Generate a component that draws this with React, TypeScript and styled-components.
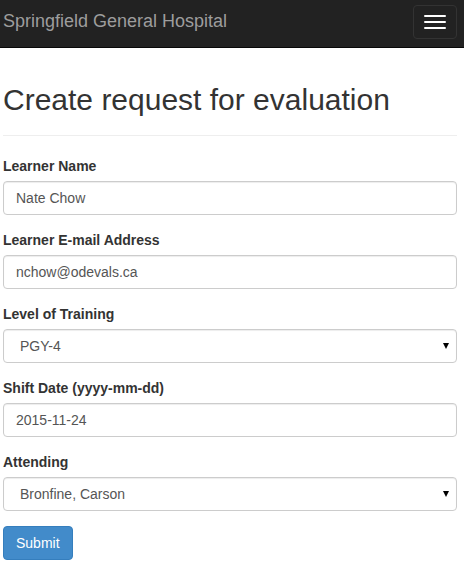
import styled, { createGlobalStyle } from "styled-components";

const GlobalStyle = createGlobalStyle`
  html, body {
    margin: 0;
    padding: 0;
    background: #fff;
  }
  body {
    font-family: "Liberation Sans", Arial, sans-serif;
    font-size: 14px;
    line-height: 1.42857;
    color: #333;
  }
  * {
    box-sizing: border-box;
  }
`;

const Navbar = styled.nav`
  height: 48px;
  background: #222;
  border-bottom: 1px solid #080808;
  display: flex;
  align-items: center;
  justify-content: space-between;
  padding: 0 7px 0 3px;
`;

const Brand = styled.a`
  font-size: 18px;
  line-height: 20px;
  color: #9d9d9d;
  text-decoration: none;
  padding-bottom: 5px;
`;

const Toggle = styled.button`
  width: 44px;
  height: 34px;
  margin-bottom: 4px;
  padding: 9px 10px;
  background: transparent;
  border: 1px solid #333;
  border-radius: 4px;
  display: flex;
  flex-direction: column;
  gap: 4px;
  cursor: pointer;
`;

const IconBar = styled.span`
  display: block;
  width: 22px;
  height: 2px;
  border-radius: 1px;
  background: #fff;
`;

const Container = styled.main`
  padding: 0 7px 0 3px;
`;

const PageHeader = styled.div`
  margin: 35px 0 20px;
  padding-bottom: 9px;
  border-bottom: 1px solid #eee;
`;

const Title = styled.h1`
  margin: 0 0 10px;
  font-size: 30px;
  font-weight: 400;
  line-height: 1.1;
  color: #333;
`;

const FormGroup = styled.div`
  margin-bottom: 15px;
`;

const Label = styled.label`
  display: block;
  margin-bottom: 5px;
  font-weight: 700;
  font-size: 14px;
  line-height: 20px;
  color: #333;
`;

const fieldCss = `
  display: block;
  width: 100%;
  height: 34px;
  padding: 6px 12px;
  font-family: "Liberation Sans", Arial, sans-serif;
  font-size: 14px;
  line-height: 20px;
  color: #555;
  background: #fff;
  border: 1px solid #ccc;
  border-radius: 4px;
  box-shadow: inset 0 1px 1px rgba(0, 0, 0, 0.075);
  outline: none;
`;

const Input = styled.input`
  ${fieldCss}
`;

const SelectWrap = styled.div`
  position: relative;
`;

const Select = styled.select`
  ${fieldCss}
  appearance: none;
  -webkit-appearance: none;
  padding-left: 16px;
`;

const Caret = styled.span`
  position: absolute;
  right: 8px;
  top: 14px;
  width: 0;
  height: 0;
  border-left: 3.5px solid transparent;
  border-right: 3.5px solid transparent;
  border-top: 6px solid #000;
  pointer-events: none;
`;

const SubmitButton = styled.button`
  height: 34px;
  padding: 6px 12px;
  font-family: "Liberation Sans", Arial, sans-serif;
  font-size: 14px;
  line-height: 20px;
  color: #fff;
  background: #428bca;
  border: 1px solid #357ebd;
  border-radius: 4px;
  cursor: pointer;
`;

export default function App() {
  return (
    <>
      <GlobalStyle />
      <Navbar>
        <Brand href="#">Springfield General Hospital</Brand>
        <Toggle aria-label="Toggle navigation">
          <IconBar />
          <IconBar />
          <IconBar />
        </Toggle>
      </Navbar>
      <Container>
        <PageHeader>
          <Title>Create request for evaluation</Title>
        </PageHeader>
        <form onSubmit={(e) => e.preventDefault()}>
          <FormGroup>
            <Label htmlFor="name">Learner Name</Label>
            <Input id="name" defaultValue="Nate Chow" />
          </FormGroup>
          <FormGroup>
            <Label htmlFor="email">Learner E-mail Address</Label>
            <Input id="email" defaultValue="nchow@odevals.ca" />
          </FormGroup>
          <FormGroup>
            <Label htmlFor="level">Level of Training</Label>
            <SelectWrap>
              <Select id="level" defaultValue="PGY-4">
                <option>PGY-1</option>
                <option>PGY-2</option>
                <option>PGY-3</option>
                <option>PGY-4</option>
                <option>PGY-5</option>
              </Select>
              <Caret />
            </SelectWrap>
          </FormGroup>
          <FormGroup>
            <Label htmlFor="date">Shift Date (yyyy-mm-dd)</Label>
            <Input id="date" defaultValue="2015-11-24" />
          </FormGroup>
          <FormGroup>
            <Label htmlFor="attending">Attending</Label>
            <SelectWrap>
              <Select id="attending" defaultValue="Bronfine, Carson">
                <option>Bronfine, Carson</option>
              </Select>
              <Caret />
            </SelectWrap>
          </FormGroup>
          <SubmitButton type="submit">Submit</SubmitButton>
        </form>
      </Container>
    </>
  );
}
